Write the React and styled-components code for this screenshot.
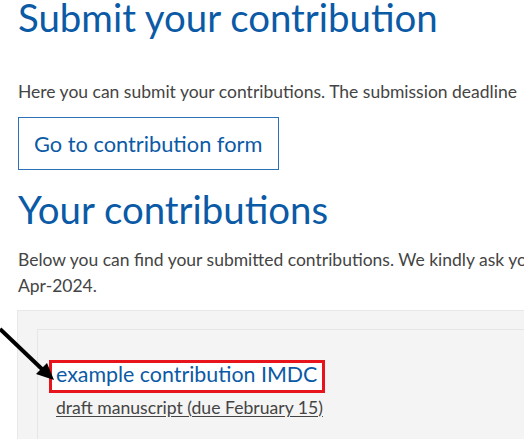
import React from "react";
import styled, { createGlobalStyle } from "styled-components";

const GlobalStyle = createGlobalStyle`
	html, body {
		margin: 0;
		padding: 0;
		background: #ffffff;
		overflow: hidden;
	}
	body {
		font-family: Lato, "Open Sans", "Liberation Sans", sans-serif;
		color: #444444;
	}
`;

const Page = styled.div`
	position: relative;
	width: 524px;
	height: 439px;
	overflow: hidden;
	padding-left: 18px;
	box-sizing: border-box;
	white-space: nowrap;
`;

const Title = styled.h1`
	margin: ${(p) => p.top || 0}px 0 0;
	font-weight: 400;
	font-size: 38.4px;
	line-height: ${(p) => p.lh || 40}px;
	color: #0b5aa6;
`;

const Text = styled.p`
	margin: ${(p) => p.top || 0}px 0 0;
	font-size: 17.5px;
	line-height: 26px;
	color: #444444;
`;

const OutlineButton = styled.button`
	display: flex;
	align-items: center;
	box-sizing: border-box;
	margin-top: 12px;
	width: 261px;
	height: 53px;
	padding: 0 0 0 15px;
	border: 1px solid #2d72b8;
	background: #ffffff;
	color: #0b5aa6;
	font-family: inherit;
	font-size: 21.8px;
	cursor: pointer;
`;

const Panel = styled.div`
	margin: 11px -20px 0 -1px;
	background: #f4f4f4;
	border: 1px solid #e8e8e8;
	padding: 18px 0 0 19px;
`;

const Card = styled.div`
	background: #f4f4f4;
	border-top: 1px solid #e6e6e6;
	border-left: 1px solid #e6e6e6;
	padding: 30px 0 30px 11px;
`;

const Highlight = styled.span`
	display: inline-block;
	border: 3px solid #e8141c;
	background: #ffffff;
	padding: 0 5px 3px 4px;
	line-height: 22px;
`;

const EntryLink = styled.a`
	color: #0b5aa6;
	font-size: 21.4px;
	text-decoration: none;
`;

const SubLink = styled.a`
	display: block;
	margin: 4px 0 0 7px;
	color: #444444;
	font-size: 17.6px;
	line-height: 22px;
	text-decoration: underline;
	text-underline-offset: 2px;
`;

const Arrow = styled.svg`
	position: absolute;
	left: 0;
	top: 325px;
`;

export default function App() {
	return (
		<>
			<GlobalStyle />
			<Page>
				<Title lh={34}>Submit your contribution</Title>
				<Text top={45}>
					Here you can submit your contributions. The submission deadline
				</Text>
				<OutlineButton>Go to contribution form</OutlineButton>
				<Title as='h2' top={19} lh={40}>
					Your contributions
				</Title>
				<Text top={18}>
					Below you can find your submitted contributions. We kindly ask you
					<br />
					Apr-2024.
				</Text>
				<Panel>
					<Card>
						<Highlight>
							<EntryLink href='#'>example contribution IMDC</EntryLink>
						</Highlight>
						<SubLink href='#'>draft manuscript (due February 15)</SubLink>
					</Card>
				</Panel>
				<Arrow width='60' height='60' viewBox='0 0 60 60'>
					<line x1='0' y1='4' x2='44' y2='46' stroke='#000' strokeWidth='4' />
					<polygon points='54,55 36,49 47,38' fill='#000' />
				</Arrow>
			</Page>
		</>
	);
}
